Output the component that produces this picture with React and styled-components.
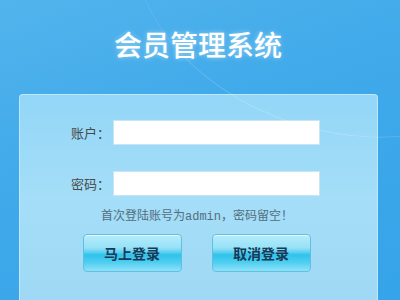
import React from "react";
import styled, { createGlobalStyle } from "styled-components";

const GlobalStyle = createGlobalStyle`
  html, body {
    margin: 0;
    padding: 0;
    width: 400px;
    height: 300px;
    overflow: hidden;
  }
  body {
    font-family: "Noto Sans CJK SC", "Noto Sans", sans-serif;
  }
`;

const Page = styled.div`
  position: relative;
  width: 400px;
  height: 300px;
  overflow: hidden;
  display: flex;
  flex-direction: column;
  background: linear-gradient(160deg, #52b4ec 0%, #3fa9ea 45%, #36a4ea 100%);
`;

const Swoosh = styled.div`
  position: absolute;
  top: -170px;
  right: -150px;
  width: 420px;
  height: 300px;
  border-radius: 50%;
  border-bottom: 1px solid rgba(255, 255, 255, 0.18);
  transform: rotate(18deg);
  pointer-events: none;
`;

const Header = styled.div`
  height: 94px;
  flex-shrink: 0;
  display: flex;
  align-items: center;
  justify-content: center;
`;

const Title = styled.h1`
  margin: 0;
  font-size: 28px;
  font-weight: 500;
  color: #ffffff;
  text-shadow: 0 0 5px rgba(255, 255, 255, 0.45);
  transform: translate(-2px, -3px);
`;

const Panel = styled.div`
  margin: 0 22px 0 19px;
  height: 230px;
  flex-shrink: 0;
  box-sizing: border-box;
  border: 1px solid rgba(200, 236, 252, 0.8);
  border-radius: 4px;
  background: linear-gradient(180deg, #93d6f7 0%, #a4def8 45%, #9dd7f3 100%);
  padding-top: 25px;
  display: flex;
  flex-direction: column;
`;

const Row = styled.div`
  display: flex;
  align-items: center;
  margin-bottom: ${(p) => p.gap || 0}px;
`;

const Label = styled.label`
  width: 90px;
  padding-right: 3px;
  text-align: right;
  font-size: 13px;
  color: #4a4a4a;
`;

const Input = styled.input`
  width: 207px;
  height: 25px;
  box-sizing: border-box;
  border: 1px solid #c9e4f2;
  background: #ffffff;
  outline: none;
  padding: 0 4px;
`;

const Hint = styled.p`
  margin: 10px 0 0 0;
  padding-right: 3px;
  text-align: center;
  font-size: 12px;
  line-height: 17px;
  color: #536e80;
`;

const Mono = styled.span`
  font-family: "Liberation Mono", "DejaVu Sans Mono", monospace;
`;

const Buttons = styled.div`
  display: flex;
  justify-content: center;
  gap: 30px;
  margin-top: 8px;
  padding-right: 4px;
`;

const Button = styled.button`
  width: 99px;
  height: 38px;
  border: 1px solid #63bfe0;
  border-radius: 4px;
  background: linear-gradient(
    180deg,
    #b6ecfb 0%,
    #97e2f7 35%,
    #5fd0f0 48%,
    #2ec3ec 55%,
    #4dcdf0 75%,
    #8fe2f8 100%
  );
  box-shadow: inset 0 1px 0 rgba(255, 255, 255, 0.7);
  font-family: "Noto Sans CJK SC", sans-serif;
  font-size: 14px;
  font-weight: 700;
  color: #183a58;
  cursor: pointer;
  padding: 0;
`;

export default function App() {
  return (
    <>
      <GlobalStyle />
      <Page>
        <Swoosh />
        <Header>
          <Title>会员管理系统</Title>
        </Header>
        <Panel>
          <Row gap={26}>
            <Label>账户：</Label>
            <Input type="text" />
          </Row>
          <Row>
            <Label>密码：</Label>
            <Input type="password" />
          </Row>
          <Hint>
            首次登陆账号为<Mono>admin</Mono>，密码留空！
          </Hint>
          <Buttons>
            <Button>马上登录</Button>
            <Button>取消登录</Button>
          </Buttons>
        </Panel>
      </Page>
    </>
  );
}
